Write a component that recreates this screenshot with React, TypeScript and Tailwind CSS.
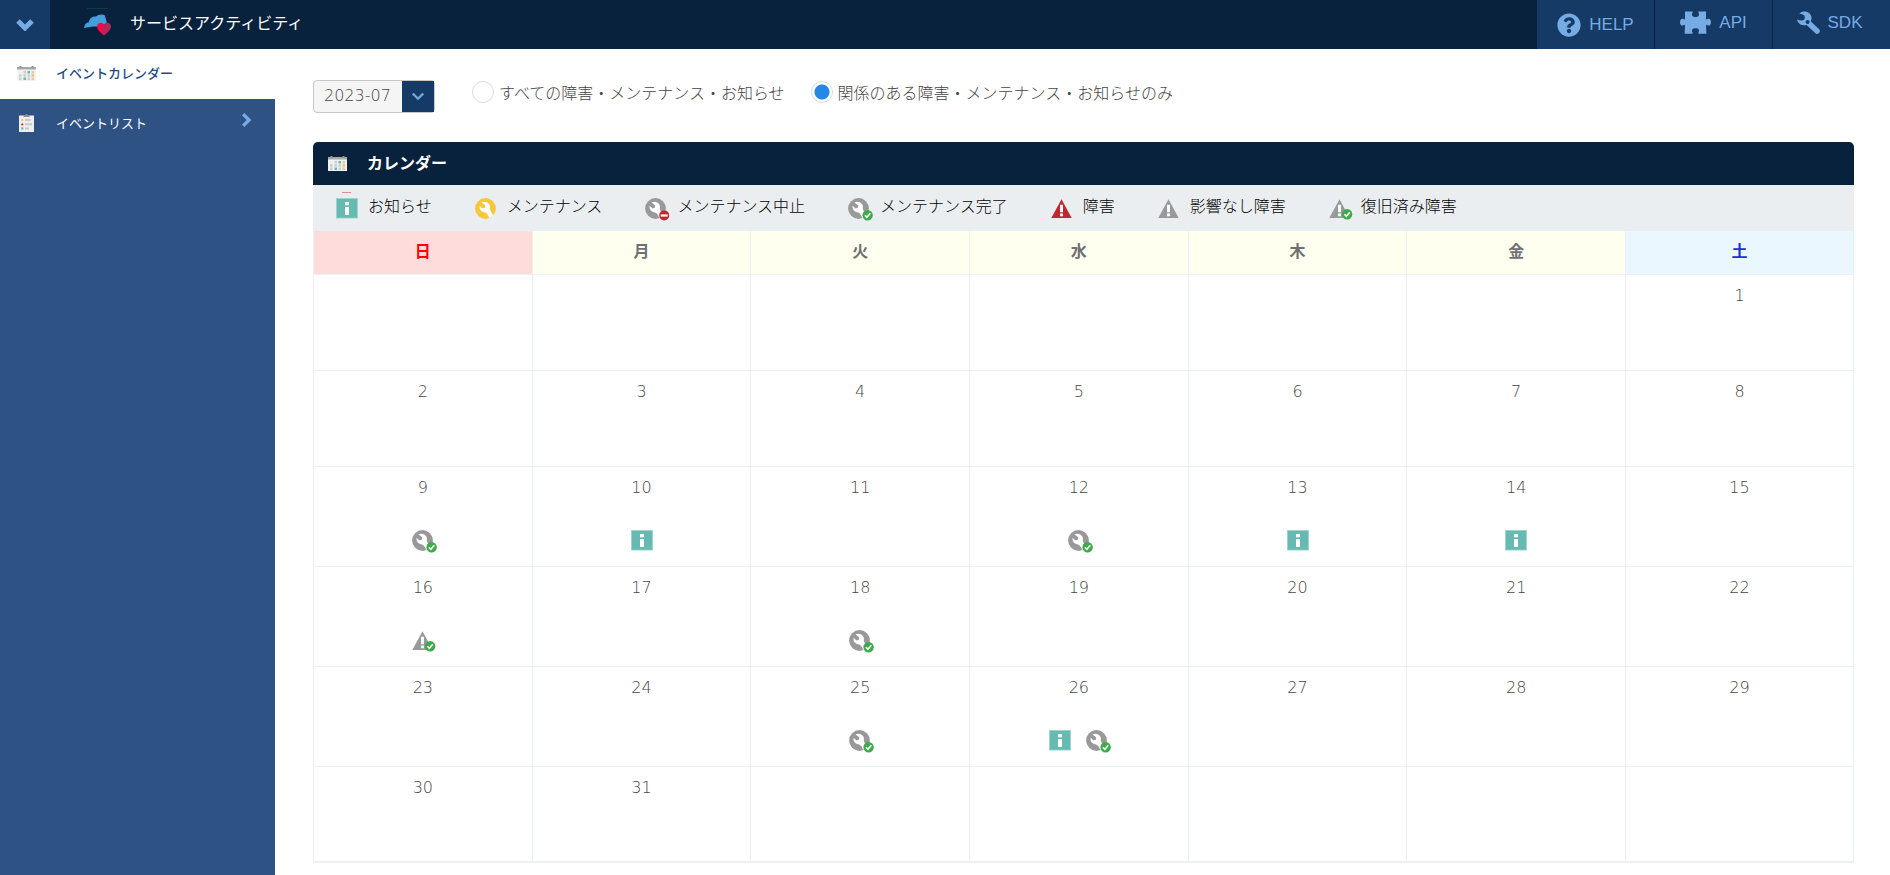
import { useState } from "react";
import clsx from "clsx";
import { FaQuestionCircle } from "react-icons/fa";

type EventType = "info" | "maintenance" | "canceled" | "completed" | "failure" | "noImpact" | "recovered";

const legend: { type: EventType; label: string }[] = [
    { type: "info", label: "お知らせ" },
    { type: "maintenance", label: "メンテナンス" },
    { type: "canceled", label: "メンテナンス中止" },
    { type: "completed", label: "メンテナンス完了" },
    { type: "failure", label: "障害" },
    { type: "noImpact", label: "影響なし障害" },
    { type: "recovered", label: "復旧済み障害" },
];

const events: Record<number, EventType[]> = {
    9: ["completed"],
    10: ["info"],
    12: ["completed"],
    13: ["info"],
    14: ["info"],
    16: ["recovered"],
    18: ["completed"],
    25: ["completed"],
    26: ["info", "completed"],
};

const weekdays = ["日", "月", "火", "水", "木", "金", "土"];

// July 2023 starts on a Saturday
const FIRST_WEEKDAY = 6;
const DAYS_IN_MONTH = 31;

const weeks = Array.from({ length: 6 }, (_, week) =>
    Array.from({ length: 7 }, (_, day) => {
        const date = week * 7 + day - FIRST_WEEKDAY + 1;
        return date >= 1 && date <= DAYS_IN_MONTH ? date : null;
    })
);

const CheckBadge = () => (
    <>
        <circle cx="19.6" cy="17.2" r="5.2" fill="#3dab49"/>
        <path d="M16.9 17.2l2 2.1 3.4-4" fill="none" stroke="#fff" strokeWidth="1.6"/>
    </>
);

const Wrench = ({ color }: { color: string }) => (
    <>
        <circle cx="10.5" cy="10.5" r="10.4" fill={color}/>
        <path
            d="M6.5 4.5C9 3.2 12.8 3.8 14.5 6.8C15.3 8.5 14.5 10.3 15 11.5L18 17.2A10.4 10.4 0 0 1 14.5 20L12 15.800C11 14.800 10.500 14.600 9 14.300C5.500 13.300 4 11 4.700 7.800L7.500 10.400L9.800 9.700L10.200 7.300Z"
            fill="#fff"
        />
    </>
);

const Triangle = ({ color }: { color: string }) => (
    <>
        <path d="M10.5 1.3L20.7 20H.3z" fill={color}/>
        <path d="M9 6.7h3v7.6H9zM9 15.5h3v2.8H9z" fill="#fff"/>
    </>
);

const EventIcon = ({ type, label }: { type: EventType; label?: string }) => (
    <svg viewBox="0 0 22 22" className="size-[22px] shrink-0 overflow-visible" aria-label={label} aria-hidden={!label}>
        {type === "info" && (
            <>
                <path d="M0 0h22v20.5H0z" fill="#9fd3cd"/>
                <path d="M1 1h20v18.7H1z" fill="#67bab2"/>
                <path d="M9 4h4v3.3H9zM9 9h4v8H9z" fill="#fff"/>
            </>
        )}
        {type === "maintenance" && <Wrench color="#f6c63c"/>}
        {type === "canceled" && (
            <>
                <Wrench color="#999"/>
                <circle cx="19.2" cy="17.4" r="5" fill="#c1272d"/>
                <path d="M15.7 16.4h7v2.2h-7z" fill="#fff"/>
            </>
        )}
        {type === "completed" && (
            <>
                <Wrench color="#999"/>
                <CheckBadge/>
            </>
        )}
        {type === "failure" && <Triangle color="#c1272d"/>}
        {type === "noImpact" && <Triangle color="#999"/>}
        {type === "recovered" && (
            <>
                <Triangle color="#999"/>
                <g transform="translate(-1.5 -1)">
                    <CheckBadge/>
                </g>
            </>
        )}
    </svg>
);

const CalendarIcon = () => (
    <svg viewBox="0 0 19 15" className="h-[15px] w-[19px] shrink-0" aria-hidden="true">
        <path d="M0 1h19v14H0z" fill="#f1f1f1"/>
        <path d="M0 1h19v2.5H0z" fill="#a8a8a8"/>
        <path d="M2.5 0h2v2h-2zM14.5 0h2v2h-2z" fill="#8f8f8f"/>
        <path d="M6.5 5h2.5v2.5H6.5zM14.5 5h2.5v2.5h-2.5zM2 8.2h2.5v2.5H2zM6.5 8.2h2.5v2.5H6.5zM10.5 8.2H13v2.5h-2.5zM2 11.5h2.5V14H2zM10.5 11.5H13V14h-2.5zM14.5 11.5H17V14h-2.5z" fill="#cdcdcd"/>
        <path d="M10.5 5H13v2.5h-2.5zM6.5 11.5H9V14H6.5z" fill="#67bab2"/>
        <path d="M14.5 8.2H17v2.5h-2.5z" fill="#f6c63c"/>
    </svg>
);

const ClipboardIcon = () => (
    <svg viewBox="0 0 15 18" className="mx-0.5 h-[18px] w-[15px] shrink-0" aria-hidden="true">
        <path d="M0 1.5h15V18H0z" fill="#efefef"/>
        <path d="M4.5 1h2a1 1 0 0 1 2 0h2v2h-6z" fill="#8f8f8f"/>
        <path d="M6 5h5.5v2H6zM6 9.2h7v2H6zM6 13.5h4v2H6z" fill="#c9c9c9"/>
        <path d="M2.2 5h2v2h-2z" fill="#f6c63c"/>
        <path d="M3.2 8.8l1.5 2.5H1.8z" fill="#c1272d"/>
        <path d="M2.2 13.3h2.2v2.2H2.2z" fill="#67bab2"/>
    </svg>
);

const ServiceLogo = () => (
    <svg viewBox="0 0 28 28" className="size-7 shrink-0" aria-hidden="true">
        <path d="M3 .5h21" stroke="#0e3a4d" strokeWidth="1"/>
        <path d="M0 20C.5 16.5 2 14.8 4.8 14.3 5.3 10.5 8.5 7.8 12 8.6c2-2.2 6-2.6 8.5-1.6 1 2.3 2 5.5 2.3 8.5L14 18.5C9 18.3 4.5 19 0 20z" fill="#459fdb"/>
        <path d="M20 27.5C17 25 13 22 13 18.5c0-4 5-5 7-1.8z" fill="#ec0b4c"/>
        <path d="M20 27.5c3-2.5 7-5.5 7-9 0-4-5-5-7-1.8z" fill="#b0285c"/>
    </svg>
);

const PuzzleIcon = () => (
    <svg viewBox="0 0 31 23" className="h-[23px] w-[31px]" fill="currentColor" aria-hidden="true">
        <path d="M5 .5h7.3c.5 0 .5.7.2 1.2C11 4.5 13 6 15.5 6s4.500-1.500 3-4.300c-.3-.5-.3-1.200.2-1.200H26v7.300c0 .7.7 1 1.200.5C29 7 31 8.500 31 11.200s-2 4.300-3.800 2.900c-.5-.5-1.200-.1-1.200.5l.4 8.200h-7.700c-.5 0-.5-.7-.2-1.200 1.500-2.800-.5-4.300-3-4.300s-4.500 1.500-3 4.300c.3.5.3 1.200-.2 1.200H4.600L5 14.600c0-.6-.7-1-1.200-.5C2 15.500 0 13.900 0 11.200S2 7 3.800 8.300c.5.5 1.200.2 1.200-.5z"/>
    </svg>
);

const ToolIcon = () => (
    <svg viewBox="0 0 23 23" className="size-[23px]" fill="currentColor" aria-hidden="true">
        <path d="M2.2 2.6C6-.8 12 .2 14 4.5c.9 2 .6 4-.3 5.7l-3.5 3.5C5.5 15.5 1 13 0 8.5c2 .8 4.5 1.300 7 .5C8 7.500 8 6 7.300 4.500 6 3.500 4 3 2.200 2.600z"/>
        <path d="M11.5 12l8.500 8" fill="none" stroke="currentColor" strokeWidth="5.5" strokeLinecap="round"/>
        <circle cx="10.6" cy="11" r="2" fill="#153a66"/>
    </svg>
);

const Chevron = ({ className, width = 3 }: { className?: string; width?: number }) => (
    <svg viewBox="0 0 18 12" className={className} fill="none" stroke="#76abe3" strokeWidth={width} aria-hidden="true">
        <path d="M2 2l7 7 7-7"/>
    </svg>
);

const toolLink = "flex h-full w-[117px] items-center justify-center gap-2 bg-[#153a66] font-['Liberation_Sans',sans-serif] text-[17px] text-[#76abe3]";

const Header = () => (
    <header className="flex h-[49px] items-center bg-[#08223d]">
        <button className="flex h-full w-[50px] items-center justify-center bg-[#153a66]" aria-label="メニュー">
            <Chevron className="h-3 w-[18px]" width={5}/>
        </button>
        <a href="#" className="ml-[34px] flex items-center gap-[18px] pb-1.5 text-base text-white">
            <ServiceLogo/>
            サービスアクティビティ
        </a>
        <nav className="ml-auto flex h-full gap-px">
            <a href="#help" className={toolLink}>
                <FaQuestionCircle className="size-6"/>
                HELP
            </a>
            <a href="#api" className={clsx(toolLink, "pb-1")}>
                <PuzzleIcon/>
                API
            </a>
            <a href="#sdk" className={clsx(toolLink, "pr-1 pb-1")}>
                <ToolIcon/>
                SDK
            </a>
        </nav>
    </header>
);

const Sidebar = () => (
    <nav className="w-[275px] shrink-0 bg-[#2f5284] text-[13px]">
        <a href="#calendar" className="flex h-[50px] items-center gap-5 bg-white px-[17px] pb-0.5 font-medium text-[#1f4a85]">
            <CalendarIcon/>
            イベントカレンダー
        </a>
        <a href="#list" className="flex h-[50px] items-center gap-5 px-[17px] pb-0.5 text-white">
            <ClipboardIcon/>
            イベントリスト
            <Chevron className="mr-1 mb-1.5 ml-auto h-[10px] w-[15px] -rotate-90" width={4}/>
        </a>
    </nav>
);

const radioClass = "size-[22px] appearance-none rounded-full border border-[#dcdcdc] bg-white checked:bg-[radial-gradient(circle,#2787e6_7px,white_8px)]";

const Filters = () => {
    const [scope, setScope] = useState("related");

    return (
        <div className="flex items-start gap-[37px]">
            <div className="relative">
                <select aria-label="年月" className="block h-[33px] w-[122px] appearance-none rounded-sm border border-[#c8c8c8] bg-[#f5f5f5] pb-0.5 pl-2.5 font-['DejaVu_Sans',sans-serif] text-base font-light text-[#444]">
                    <option>2023-07</option>
                </select>
                <span className="pointer-events-none absolute inset-y-px right-px flex w-8 items-center justify-center bg-[#153a66]">
                    <Chevron className="h-[9px] w-[14px]" width={3}/>
                </span>
            </div>
            <div className="flex gap-[26px] pt-px text-base leading-[22px] font-light text-[#444]">
                <label className="flex items-center gap-[5px]">
                    <input type="radio" name="scope" className={radioClass} checked={scope === "all"} onChange={() => setScope("all")}/>
                    すべての障害・メンテナンス・お知らせ
                </label>
                <label className="flex items-center gap-[5px]">
                    <input type="radio" name="scope" className={radioClass} checked={scope === "related"} onChange={() => setScope("related")}/>
                    関係のある障害・メンテナンス・お知らせのみ
                </label>
            </div>
        </div>
    );
};

const Calendar = () => (
    <section className="mt-[29px]">
        <div className="flex h-[43px] items-center gap-5 rounded-t-[5px] bg-[#08223d] px-[15px] pb-1 text-base font-bold text-white">
            <div className="mt-1">
                <CalendarIcon/>
            </div>
            <h2>カレンダー</h2>
        </div>

        <ul className="flex h-[46px] gap-[43px] bg-[#ebeef1] px-[23px] pt-2 text-base font-light text-black">
            {legend.map(({ type, label }) => (
                <li key={type} className="flex items-start gap-[10px]">
                    <span className="relative mt-[5px]">
                        {type === "info" && (
                            <span className="absolute -top-1.5 left-1.5 h-px w-[9px] bg-[#dd8d95]"></span>
                        )}
                        <EventIcon type={type}/>
                    </span>
                    {label}
                </li>
            ))}
        </ul>

        <table className="w-full table-fixed border-collapse border border-t-0 border-b-2 border-[#ebf0f5] text-[#707070]">
            <thead>
                <tr>
                    {weekdays.map((day, index) => (
                        <th
                            key={day}
                            className={clsx(
                                "h-[43px] border-x border-b border-[#ebf0f5] pb-1 text-base font-bold",
                                index < 6 && "w-[14.2%]",
                                index === 0 && "bg-[#ffdcdc] text-[#f00]",
                                index > 0 && index < 6 && "bg-[#fffff0]",
                                index === 6 && "bg-[#ebf7ff] text-[#1a32c8]"
                            )}
                        >
                            {day}
                        </th>
                    ))}
                </tr>
            </thead>
            <tbody>
                {weeks.map((week, index) => (
                    <tr key={index}>
                        {week.map((date, day) => (
                            <td key={day} className="h-24 border border-[#ebf0f5] p-0 pt-[9px] text-center align-top font-['DejaVu_Sans',sans-serif] text-base leading-6 font-light text-[#444]">
                                {date}
                                {date && events[date] && (
                                    <div className="mt-[30px] flex justify-center gap-[15px] pb-[14px]">
                                        {events[date].map((type) => (
                                            <EventIcon key={type} type={type} label={legend.find((item) => item.type === type)?.label}/>
                                        ))}
                                    </div>
                                )}
                            </td>
                        ))}
                    </tr>
                ))}
            </tbody>
        </table>
    </section>
);

export default function App() {
    return (
        <div className="flex min-h-screen flex-col bg-white font-['Noto_Sans_CJK_JP',sans-serif]" lang="ja">
            <Header/>
            <div className="flex flex-1">
                <Sidebar/>
                <main className="min-w-0 flex-1 pt-[31px] pr-9 pl-[38px]">
                    <Filters/>
                    <Calendar/>
                </main>
            </div>
        </div>
    );
}
